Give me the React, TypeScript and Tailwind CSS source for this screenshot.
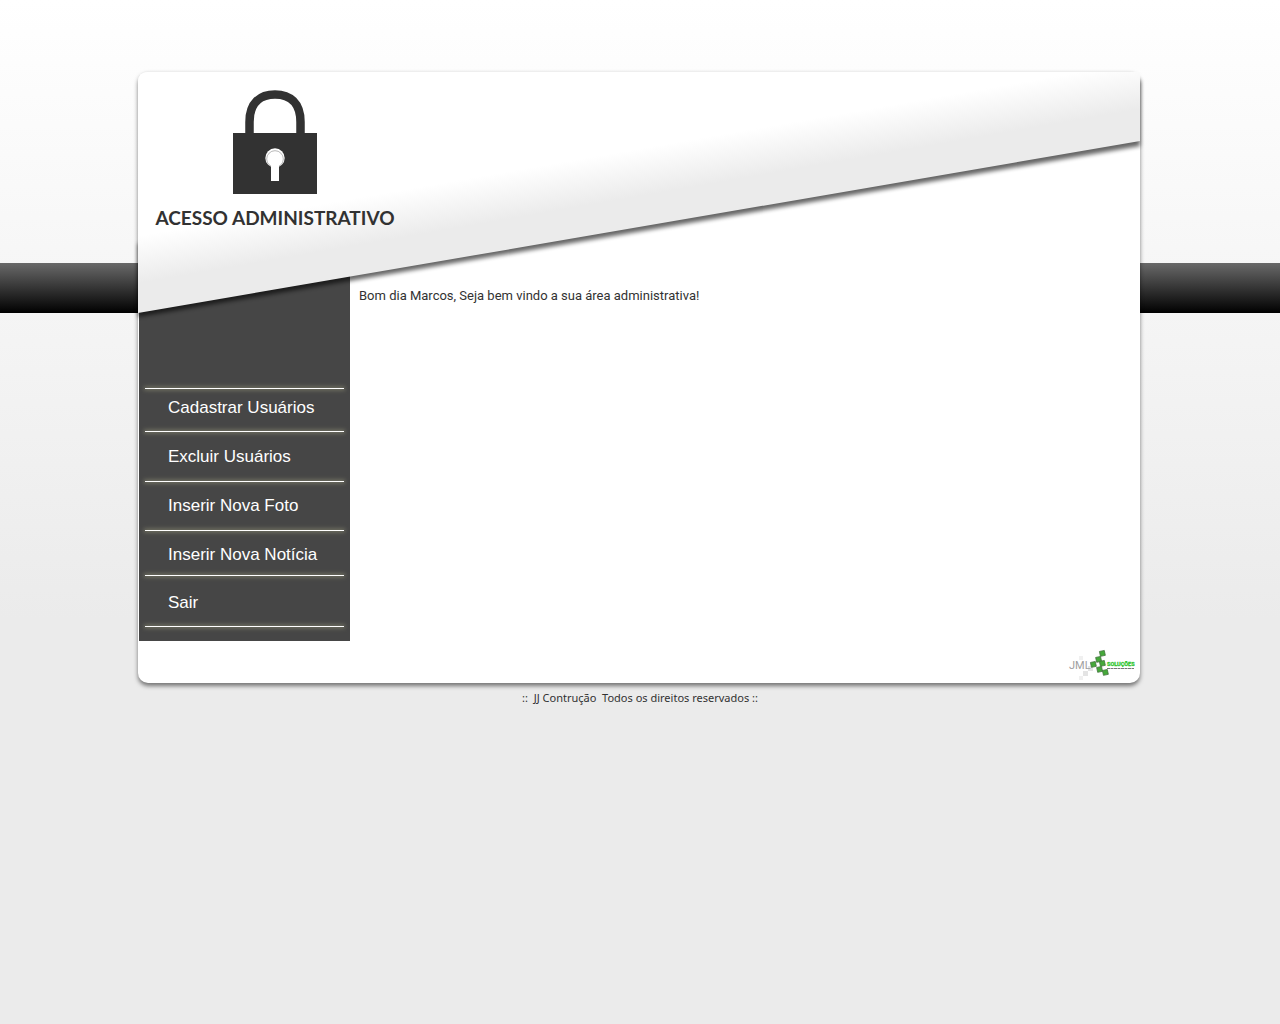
import React from "react";

const menu = [
  { label: "Cadastrar Usuários", size: "h-[43px] pb-1" },
  { label: "Excluir Usuários", size: "h-[50px]" },
  { label: "Inserir Nova Foto", size: "h-[49px]" },
  { label: "Inserir Nova Notícia", size: "h-[45px] pt-1" },
  { label: "Sair", size: "h-[51px] pt-1" },
];

function Sheet() {
  return (
    <svg
      className="absolute left-0 top-0 w-full h-[241px] overflow-visible"
      viewBox="0 0 1002 241"
      preserveAspectRatio="none"
      aria-hidden="true"
    >
      <defs>
        <linearGradient id="sheet" gradientUnits="userSpaceOnUse" x1="0" y1="164" x2="8" y2="210">
          <stop offset="0" stopColor="#ffffff" />
          <stop offset="1" stopColor="#ebebeb" />
        </linearGradient>
        <filter id="soft" x="-5%" y="-10%" width="110%" height="120%">
          <feGaussianBlur stdDeviation="2" />
        </filter>
      </defs>
      <polygon points="0,172 1002,8 1002,74 0,245" fill="#000" opacity="0.6" filter="url(#soft)" />
      <path d="M0 10Q0 0 10 0H1002V69L0 241Z" fill="url(#sheet)" />
    </svg>
  );
}

function Padlock() {
  return (
    <svg className="w-[84px] h-[104px]" viewBox="0 0 84 104" aria-hidden="true">
      <path d="M16.5 46V32C16.5 13 27 4.5 42 4.5S67.5 13 67.5 32V46" fill="none" stroke="#323232" strokeWidth="8.5" />
      <rect y="43" width="84" height="61" fill="#323232" />
      <circle cx="42" cy="68" r="9.7" fill="#fff" />
      <circle cx="42" cy="69" r="8.3" fill="#fff" stroke="#999" strokeWidth="0.7" />
      <rect x="38" y="74" width="8" height="17" fill="#fff" />
    </svg>
  );
}

function Logo() {
  return (
    <svg className="w-[68px] h-[34px]" viewBox="0 0 68 34" role="img" aria-label="JML Soluções">
      <g fill="#e4e4e4">
        <rect x="11" y="7" width="4" height="4" fill="#f0f0f0" />
        <rect x="15" y="22" width="5" height="5" />
        <rect x="11" y="27" width="4" height="4" fill="#f0f0f0" />
        <rect x="20" y="17" width="5" height="5" />
      </g>
      <text x="1" y="20" fontFamily="Roboto" fontSize="11" fill="#a0a0a0">JML</text>
      <g fill="#45a93a" stroke="#3f6e3a" strokeWidth="0.7">
        <rect x="32" y="2" width="5" height="5" transform="rotate(-12 34 5)" />
        <rect x="28" y="8" width="5" height="5" transform="rotate(-12 30 10)" />
        <rect x="23" y="13" width="5" height="5" transform="rotate(-12 25 16)" />
        <rect x="32" y="12" width="5" height="5" transform="rotate(-12 34 15)" />
        <rect x="29" y="18" width="5" height="5" transform="rotate(-12 31 20)" />
        <rect x="35" y="21" width="5" height="5" transform="rotate(-12 37 24)" />
      </g>
      <text x="39" y="17" fontFamily="Roboto" fontWeight="bold" fontSize="5.5" fill="#2fc52f" stroke="#2fc52f" strokeWidth="0.3">SOLUÇÕES</text>
      <path d="M39 19.5H66" stroke="#777" strokeWidth="1" strokeDasharray="3 0.5" />
    </svg>
  );
}

function GlowLine() {
  return <div className="h-px bg-white shadow-[0_0_4px_1px_#82826c]" />;
}

export default function App() {
  return (
    <div className="min-h-screen bg-[#ebebeb] bg-[linear-gradient(#696969,#000000),linear-gradient(#ffffff,#ebebeb)] bg-[position:0_263px,0_0] bg-[size:100%_50px,100%_620px] bg-no-repeat pt-[71px] pr-[2px] text-[#323232] font-['Noto_Sans',sans-serif]">
      <div className="mx-auto max-w-[1002px] rounded-[10px] bg-white border-t border-[#eeeeee] shadow-[0_3px_4px_rgba(0,0,0,0.5)]">
        <header className="relative h-[200px]">
          <Sheet />
          <div className="relative z-10 ml-[18px] flex w-[238px] flex-col items-center pt-[18px]">
            <Padlock />
            <h1 className="mt-3 whitespace-nowrap font-[Lato,sans-serif] text-[19px] leading-6 font-bold">ACESSO ADMINISTRATIVO</h1>
          </div>
        </header>
        <div className="flex">
          <nav className="ml-px h-[369px] w-[211px] shrink-0 bg-[#464646] px-[6px] pt-[116px]">
            <GlowLine />
            <ul>
              {menu.map((m) => (
                <li key={m.label} className="flex flex-col">
                  <div className={`-mb-px flex items-center pl-[23px] ${m.size}`}>
                    <a href="#" className="-mt-px font-['Liberation_Sans',sans-serif] text-[17px] leading-5 text-white">{m.label}</a>
                  </div>
                  <GlowLine />
                </li>
              ))}
            </ul>
          </nav>
          <main className="pl-[9px] pt-[14px]">
            <p className="font-[Roboto,sans-serif] text-[13px] leading-5">Bom dia Marcos, Seja bem vindo a sua área administrativa!</p>
          </main>
        </div>
        <div className="flex h-[42px] justify-end pr-[4px] pt-[8px]">
          <Logo />
        </div>
      </div>
      <footer className="mt-[7px] pl-[2px] text-center text-[11px] leading-4 whitespace-pre">::  JJ Contrução  Todos os direitos reservados ::</footer>
    </div>
  );
}
